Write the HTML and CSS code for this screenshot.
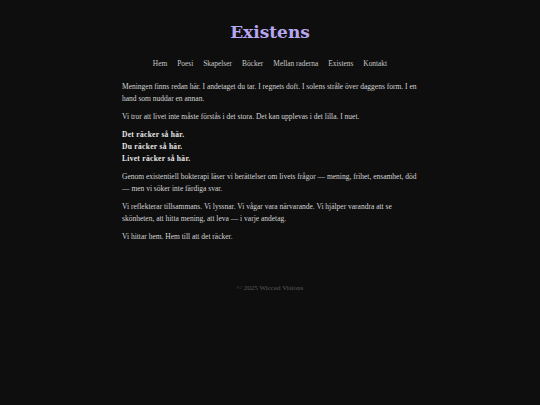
FILE: index.html
```html
<!DOCTYPE html>
<html lang="sv">
<head>
<meta charset="utf-8">
<title>Existens</title>
<link rel="stylesheet" href="styles.css">
</head>
<body>
<header class="site-header">
  <h1 class="site-title">Existens</h1>
  <nav class="site-nav">
    <a href="#">Hem</a>
    <a href="#">Poesi</a>
    <a href="#">Skapelser</a>
    <a href="#">Böcker</a>
    <a href="#">Mellan raderna</a>
    <a href="#">Existens</a>
    <a href="#">Kontakt</a>
  </nav>
</header>
<main class="content">
  <p>Meningen finns redan här. I andetaget du tar. I regnets doft. I solens stråle över daggens form. I en hand som nuddar en annan.</p>
  <p>Vi tror att livet inte måste förstås i det stora. Det kan upplevas i det lilla. I nuet.</p>
  <p class="strong-lines"><strong>Det räcker så här.</strong><br><strong>Du räcker så här.</strong><br><strong>Livet räcker så här.</strong></p>
  <p>Genom existentiell bokterapi läser vi berättelser om livets frågor — mening, frihet, ensamhet, död — men vi söker inte färdiga svar.</p>
  <p>Vi reflekterar tillsammans. Vi lyssnar. Vi vågar vara närvarande. Vi hjälper varandra att se skönheten, att hitta mening, att leva — i varje andetag.</p>
  <p>Vi hittar hem. Hem till att det räcker.</p>
</main>
<footer class="site-footer">© 2025 Wicced Visions</footer>
</body>
</html>
```
FILE: styles.css
```css
html, body {
  margin: 0;
  padding: 0;
  background: #0e0e0e;
}
body {
  font-family: "Liberation Serif", "DejaVu Serif", serif;
  color: #d4d4d4;
  font-size: 7.5px;
}
.site-header {
  text-align: center;
  padding-top: 20px;
}
.site-title {
  margin: 0;
  font-family: "DejaVu Serif", serif;
  font-size: 17px;
  font-weight: bold;
  color: #b7a6f0;
  line-height: 24px;
}
.site-nav {
  display: flex;
  justify-content: center;
  gap: 10px;
  margin-top: 15px;
}
.site-nav a {
  color: #c8c8c8;
  text-decoration: none;
  font-size: 7.4px;
}
.content {
  width: 296px;
  margin: 13px auto 0;
}
.content p {
  margin: 0 0 6px;
  line-height: 12px;
}
.strong-lines {
  line-height: 11.5px;
}
.strong-lines strong {
  color: #e8e8e8;
  letter-spacing: 0.3px;
}
.site-footer {
  text-align: center;
  color: #5a5a5a;
  margin-top: 41px;
  font-size: 7px;
}
```
